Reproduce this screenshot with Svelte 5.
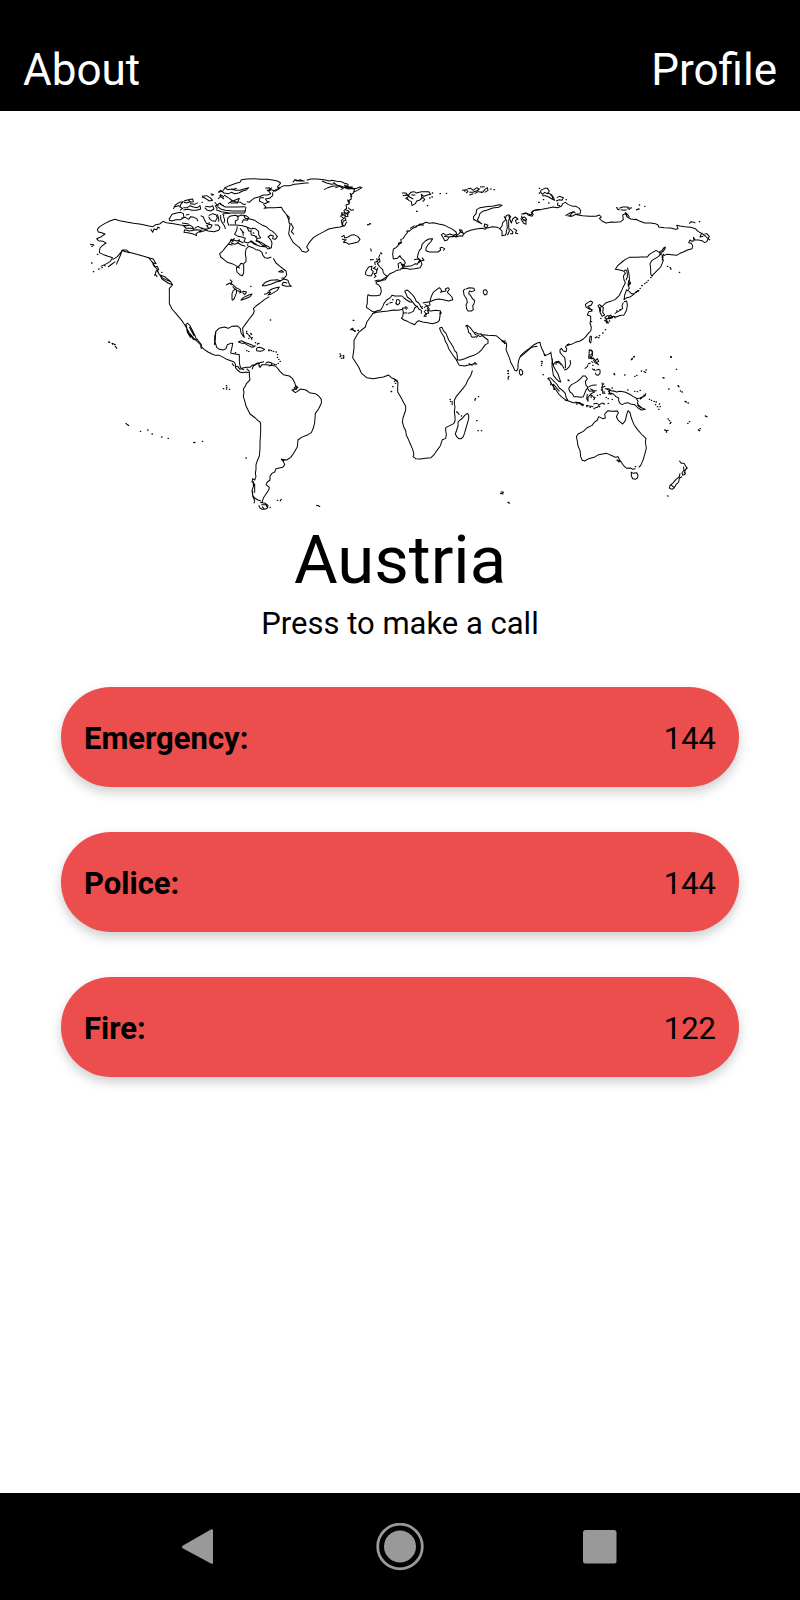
<script>
  const contacts = [
    { label: 'Emergency', number: '144' },
    { label: 'Police', number: '144' },
    { label: 'Fire', number: '122' }
  ];

  // Coastlines by region; each region is drawn at three units to the pixel.
  const regions = [
    {
      name: 'North America', x: 80, y: 165,
      coast: [
        'M98 278l-14-4-13-5-13-6 2-14 8-8 10-7-9-5-14-2-5-6 14-6 11-8-10-4-10-2-3-8 8-9 14-8 15-8 16-5 14 4 20 4 22 4 22 3 24 5 12 2 8-6 12-2 10-8 10 4 22 3 20 4 20 2',
        'M98 278l-8 12-14 8-14 6M98 284l14-9 10-12 4-6 12 3 10 3-8-8-14 0-3 12-8 18-6 14M84 306l12-9 10-7M148 262l16 4 22 6 20 6 8 10 8 12 10 14 4 12 10 12 16 8 10 4M206 278l14 4 8 14-8-2-8-8M218 296l6 10 8-2 4 10-8 4-2 10 6 8M240 330l16 6 16 14 6 10-14-6-18-12-6-12M212 192l6 10 4-10 8 2 4-8 6 4M276 362l-8 8 0 22 0 24 8 16 12 14 12 14 8 10 8 12 12 22 14 16 8 8 12 12 2 12',
        'M322 474l8 8 8 16 9 18 2 10-10-4-10-14-8-16-3-14 6-4M328 486l14 26M318 478l4 24 10 16',
        'M404 540l2-18 1-22 10-10 16-4 12 4 10-6 18-1 8 8 2 12 6 10 4 4-4-14-1-14 10-14 12-16 8-10 5-10-3-8 8-8 14-10 12-10 14-8',
        'M546 362l10-10 16-6 20-2 10 4-14 3-14 6-18 5-10 0M600 348l12-6 12 4 4 12 6 6-16 0-12-4 4-8 12 2M566 378l10-6 12-4 10-2-6 10-10 6-10 6-8 2 8-8-10 0M552 388l8-2 10-6',
        'M580 280l8 14 12 10 10 8 8 6 2 12-6 8-10 2M612 322l-8-6-8 4 12 2M574 276l-10 4-10-2-6-8-2-8-8-6-10-2-10-6-12-4-8 8-2 14 2 14 0 10-7 6 0 14 0 14-4 8-8-3-8-8-2-12 8-6 6-8 6 2M480 310l-12-8-12-6-14-4-10-8-10-8-3-10 9-8 8-10 10-12 8-10 10-6',
        'M438 360l12-6 10 6 8 8 12 6 2 6-10-3-8-5-6-8M450 344l6 6-4 10M456 404l0-18 4-10 8-4 2 10-4 10-4 10-6 4M478 384l12-5 10 2-6 8-6-6M482 406l8-8 16-8 10-3-6 8-14 6-14 5',
        'M280 132l6-12 12-8 12-2-8 8-2 8 8 4-8 6M282 126l14-4 8 6M312 108l12-4 6 6-10 4-8-2M326 104l12-2 2 8-10 2M310 128l12 0 8-6 10 4 12 2 8-6 2 10-12 4-14 0-12-3-14 2M330 116l14 2 10-5',
        'M366 94l14-2 10 6 8 8-10 2-12-8-10-4M392 86l10 4M376 124l14 2 8-4 4 10-10 6-10-2-8-8M404 112l8 8 8-6 8 8 8 4 14 0 20 0 26-1M412 124l10 8 14 4 22 2 40 0M420 118l12 4M408 134l16 6 20 3 50 1 4-18M412 132l-6-10 10-2M430 146l20-1',
        'M268 162l8-14 14-4 12-2 8 4 2 12-10 6-14 0-12 4-8-2 0-8M304 160l12-3 10 6 6-8 10 2 8 4 4 8M318 150l10-2M362 152l8 4 4 10 6 10 10-3M386 152l12-6 10 3 4 10-6 10-10-2-6-4-4-8M412 148l4 12 0 10',
        'M306 174l20 3M304 180l14 3 10-3 8 4 6 8-10-2-14 0-8-8M314 194l14 4 20-4 16 2-10 6-6 4 2 6-8-4-14-4-16-2 2-8M344 190l10-6 14 8 14 0 10-4 4-8-8-2-8 4 6 8M364 188l20 10 18 2 14-4 4-8-6-8-10 0M358 202l20-6',
        'M422 150l0 12 4 10 8 12 2 8M430 154l4 10-2 10M428 146l4 8M446 182l-4-14 2-10 8-5 14-2 8 3 0 10-8 4 0 10M470 156l14-6 14 2 8 6-4 8-12-2-4 10M490 150l6 10 8 2M448 180l20 0 20 2 12 4 14 6 10-2',
        'M494 160l16 2 14 4 10 7 14 8 12 5 8 8 10 5 8 8 6 8-6 8-8-2 2-8-8-3-8 6 8 8 4 10-2 14-10 4-8-8-10-4-8-8-10-4 4-8 10-1-6-10 0-10-10-8-10-2M472 184l-2 12-6 12 10 6 12 2 10 4-4 10 12 4 10-6 8 6 8 4M502 188l4 10 10 0M480 190l8 10 2 12M512 198l2 12 10 2 8 10M530 226l14 6 12 8 14 8M510 228l14 10 16 6 20 2',
        'M452 222l8 6-6 6 10 4 10-4 10 6 12 4M460 224l10 4 10-4M470 236l8-8 12 6M446 238l12 2',
        'M416 82l12-4 8-10 12-6 20-7 12-3 4-8 16-2 22-1 20 2 20 0 16 2 14 3 10 6-6 8-4 4 8 4-14 8-12-4-8 4 6 8-10 4-12 0-12 5-16 5-8 6-6 6-8-2M434 66l8 8 14-2 10 4 14 0 12-4 14-4-6 6-12 4-12 6-12 2-10-4-8 4-14-2-10-8-8 6M432 90l16 10 10 8 10-4 10-4-6 14-14 0-6 0M444 116l12-8 12 2 14 2 8 6 8 0M432 102l-10-8-8 8M420 88l12 8M556 70l12-2 4 6-12 2M562 78l14-10M456 74l14-4'
      ],
      dots: '32 238 36 239 40 240 36 244 35 294 40 320 56 312 66 308 74 302 52 268 452 226 420 92 558 264 512 364 571 465 224 330 232 320 245 322 88 532 98 536 104 538 396 90 366 112 500 505 508 512 516 518 506 520 514 508 520 204 528 214 490 202 502 240'
    },
    {
      name: 'Greenland and the British Isles', x: 220, y: 165,
      coast: [
        'M160 80l8-6 12-6 12-6 16 0 16-4 16-2 16-2 10 0M218 52l8-8 12 4 16 0M222 44l10 4 8-4 10 4M260 46l12-4 20 0 20 2 16 4 8-2 14 3 14 1 8 4 12 4 0 6-12 2 14 2 12 0M306 48l14 6 14 4 10-2M312 74l12-6 12-4 14-2M346 68l12-4 12 6-8 4M340 52l10 8 14 4 20 8 14-2 6 2-4 12-8 6 2 12-10 6 4 8-10 4 2 10-8 6 2 8-10 0 4 8M372 60l16 6 10 0M384 68l16 4 10-2 10-4 6 2-14 8-12 6M390 84l6 12M382 104l8 8',
        'M158 82l0 10-10 8-12 2 6 8 6 0-14 6-8-4-8-4 2-10 12 0M130 118l8 8-6 4 14-2 18 0 20-1 6 10 8 10 10 10-2 12 4 10-2 14-2 14 6 12 8 14 10 8 8 6 8 12 12 3 8-6-6-10 8-14 12-14 16-10 16-8 14-8 18-4 16-2 14-4 6-12M200 150l6 14 2 12M212 174l8 14-6 12 8 8',
        'M374 184l-8-6-2-12 8-6-10-6 4-6 10 4-2-10 10 6 2-10-10-4M366 182l4-14 8-2-4-10 10-2-4-10 10-4M384 128l10 8 8-2',
        'M364 216l8-5 2 8 10-3 8-5 10-2 12 6 6 8-6 8-12 3-16 4-6-5-10-1 6-6-10-4M370 224l10 0',
        'M436 328l2-10 8-12 10-2-2 10 6 6-6 12-10 0-8-4M466 300l-2-8 8-4 6-8 2 10-8 6 8 10 8 8 2 10 6 6 6 4-6 10-10 2-14 0-8 3M468 304l-8 6 10 4 0 10-8 2 6 8-6 4M474 308l-4 10M476 278l4-10M452 250l2 10'
      ],
      dots: '443 179 449 177 452 284 458 284 470 282 482 264 472 290 392 494 400 496 404 498 414 496 398 490 400 466 590 139'
    },
    {
      name: 'Europe and western Asia', x: 340, y: 165,
      coast: [
        'M160 282l-2-14 2-16 8-4 6-6 2-8 8-2-2-8 8-4 6-10 8-10 6-4 8-6 10-4 10-8 10-2 10-4 10 3 12-2 16 4 18 4 12 6 12 6 10 8 2 6-10 4-10-4-12 4-8-6-6 4 6 10 4 8 8-2 6-10 10 0 10-2 10-8 6-8M198 198l12 0M210 190l14-8M226 184l14-4 12 0M174 240l12-8M312 214l14 2 14-2',
        'M340 212l8 4 12-4 8 2 2-10-8-2-4-8 8 2 2 8M370 208l10-8 12-4 16-4 18-2 10 3 8-12-10-4-2 8 10 4 16-4 14 2 8 4 6-8 2-10 8-8 2-12 8-4 6 6-6 10 0 20 2 14-6 12M402 166l-2-10 8-10 2-12 10-6 18-3 22-2 18-4 8 2-10 6-18 2-16 6-14 4-8 6-4 12-4 8 6 6 8 6M400 162l16 10 10 4M478 190l8 8 0 14 10-2 4-8M506 152l4 12 4 10 4-12 8-6 8 6-8 4 4 10 8-4M492 154l8 14 2 20-4 14M510 192l8 8 0 6-8 0M520 190l10 6-4 8 8 2M544 158l10-2 6 8-10 4M550 148l8-4 6 6 12 4 4-6-6-6 10-6 18-2',
        'M160 282l12-2 8-8 4 8 8 6 4 8-4 6 2 4 10 0 12-2 10-6 6 2 4-8 4-6-8-6 2-10 4-12 6-6 2-12 10-10 10-6 12-1-6 10-8 8-6 10 0 8 10 4 14 0 12 0 8-6-2-6 6-2 8 4-4 6M176 310l-2-14 8-4 4 10 4-4 2 8-8 4M186 296l2 12M222 284l12-2 8 4-6 8M180 312l16-2 14 3 14-2 16-3 6-10-4-10 10-2-6-8',
        'M182 314l-12 2-10 6-10 4-8 8-12 8-8 6-12 2-2 6 8 4 6 8 2 12-4 10-10 2-18 0-8-3-2 10 0 14-3 14 9 6 8 6 6 2 10-4 10-2 6-10 4-10 8-10 12-8 4-6 8 2 12 0 10 0 6 6 8 6 10 6 8 0 6 8 6 6-6 4-4 10-8 4-8 2',
        'M194 378l4 8 4 10 10 8 8 10 6 8 6 2 4 8 8 4 0 10M194 378l8-3 8 7 8 8 6 8 4 10 8 6 4 6 4 8 4-4M248 414l20-4 2 10-8 4 6 8-6 4 4 8-8 2M254 418l8 4-10 6M252 438l8 12M270 408l4-14 6-12 10-8 8-6 4 4 4 8 12-2-2-6 8-4 4 4-6 10 8 8 6 6 2 8-12 4-16-4-14-2-12 2-14 6M300 382l8-2',
        'M96 446l14-4 14-2 20-2 16-3 14 1 14-3 2 10-2 12-4 4 8 6 10 4 12 6 10 4 6-8 6-4 12 4 14 2 16 3 14-4 6-6 2-14 2-14-14-2-16 2-12-2M298 444l8 0M258 446l-6 8 8 0',
        'M170 404l6 0 4 4-2 8-6 4-4-6 2-10M138 420l8-4M148 414l10-2M188 444l14 0M186 430l10-2 4 6M196 424l8 6',
        'M378 372l10-4 14 2 2 6-8 4-8-2-2 8 6 6 6 10 6 4-2 10-4 6 2 12-6 4-10 0-4-6-2-12 4-8-2-10-8-12-2-14 6-4M430 376l8-2 4 6-2 8-6 2-4-6 0-8',
        'M186 84l12 0 6 8 8-10 10-2 8 4 14-4 10 0 12 0 6 8-10 2-10 4-8-6 2 12-8 6-8 2-4 8-10 6-2-12-8-4-6-8 8-4-10-4-10 2M240 104l8-8 6 8-6 6M196 100l8 4M214 90l12 0M208 96l12 6',
        'M366 76l14-2 4 6-6 4M382 72l10-2 8 6 10-8 8 4-8 6-12 4-10 0M404 86l10-6 14 2 6-8 8-6 2 8-10 6M420 66l14-1M388 90l12-4',
        'M98 446L80 472L76 486L56 502L42 526L42 550L38 578L56 606L64 624L80 638L100 641L116 638L130 636L146 630L154 638L168 644L172 652M162 640l2 6'
      ],
      dots: '84 179 90 176 300 86 319 85 277 84 276 96 269 99 262 122 230 139 92 284 110 290 124 266 462 74 452 72 374 78 412 76 424 82 40 466 38 494 44 498 54 496 34 492 2 572 10 572 10 578 4 580 504 618 504 626 506 634 504 642 158 404 168 416 246 430 256 436 262 430 300 446 596 112 598 84'
    },
    {
      name: 'Eastern Asia', x: 520, y: 165,
      coast: [
        'M4 152l4 10 10 6 0 10-8-4-8-14M4 148l12-4 18 6 4-12 12-4 16-1 20-4 14-3 12 2 12-4 4-8 8-4 8 6 14 6 10 0 10 6 4 8-2 8-12 2-10 4-10 2 8-10 8-4M142 152l14 2 10-6 8 2 14 2 20 2 20 0 10-4 6 6-6 4 8 8 12 6 16-3 12 1 16-2 8-6-2-14 8-4 6 10 10 6 16 2M316 142l8 8 4 6M346 162l12 6 16 6 18 0 14 2 8 4 2 6 16 2 20 1 14 4 8-2-4-10 10 2 14 2 18 2 14 4 8 8 14 8 8 6 8 8 6 4',
        'M554 206l6 0 8 8-4 8-4 8-6 3-8-6-10-2-10 0-6-8 2 10-6 2-6-4-4 8 8 2 4 8-2 8-14 4-12 6-10 4-10 6-16-2-14-1-8 4M544 206l-4 10 10-2M514 228l8 0',
        'M432 266l-6 10 4 10-4 10-4 10-8 8-8 8-6 6-4 6-4-8 0-14-2-16 6-10 10-6 10-6 8-8-10-6-6-4-10 6-10 6-6 8-18 0-16 1-20 0-12 6-10 8-12 10-8 12 14 2 12 4 4 6-6 8 2 12 4 8-6 12-6 14-6 12-12 12-14 6-14 4-10 10-8 4 2 10-2 4',
        'M416 262l10-6 6-8 4-2-4 10-8 6M428 262l8-14M418 268l6-6M424 270l8 0M426 286l4-12M312 316l8 0 2 10 0 10-4 10M322 308l4 14 2 14 0 10 4 10-8 4M326 346l-2 14 4 10-4 4M330 348l-4 16M318 374l8 4 8 8 10 0-8 6-6 4-10 2-8 6 2-14 6-16M344 384l8-6 6-2M312 410l8-2 2 12-2 14-6 12-4 6M310 412l-4 10 2 8-8 6-10 6-6 4M308 450l-10 2-10 4-8-2-10 4-10 4-6-4 8-6 12 0M256 458l6 12 4 4-6 0-4-8M264 458l8-8 6 8-12 4M240 420l10 8-2 14 6 8-8 4-6-12-2-12-4-8 6-4',
        'M218 434l-10-2-10-6-2-8 8-6 8-4 6 4-4 8-10 4 8 8 4 6-10 2-4 10 10 4 0 10-2 10 4 14-2 10-8 8-6 8-8 8-10 6-14 4-12 6-8 2-10 4 4 8-2 8-8-2-6-8-4 4 0 8 6 8 8 8 2 14 0 18',
        'M210 514l4 0 0 10-2 10-4-4 2-16M208 556l8 2 2 12-6 10-6 0 2-24M214 578l8 2M220 584l6 10 8 2M204 596l8-2',
        'M0 574l12-12 14-10 14-12 12-6 8-2 2 10 4 10 4 8 4 12 10-4 8-4M92 560l2 12 2 10 2 18M108 600l0-8 10 2 6 6M140 540l8-4',
        'M62 76l12-6 8 0 6 8-6 8-8-4-6 6-6-6 0-6M66 92l10 0 10 4 10 6 8 4-4-10-8-6M84 84l12 6 2 12M110 98l8-4 6 2M108 108l10-4 8 2 4-8-6-2M114 112l-2 8 8 2M136 152l14-8 10-4 6 4',
        'M298 130l10-4 14 0 8 4 6-2M302 134l10 2 8-2M322 130l8 4M314 144l8 4M320 144l0 12M508 176l4-6 10 2 4 2M348 134l8-2',
        'M378 352l0-2M366 360l-2 2M352 380l4-2'
      ],
      dots: '58 70 56 112 70 104 86 114 138 104 290 128 292 132 296 134 358 120 374 124 356 132 350 134 538 170 442 304 450 308 452 312 478 322 380 352 374 356 366 362 360 370 354 378 348 382 384 346 392 338 256 494 248 504 238 512 230 516 226 518 236 518 242 460 254 466 268 468 284 458 290 438 300 434 336 580 342 574 334 584 452 576 66 590 214 470'
    },
    {
      name: 'South America and the Caribbean', x: 80, y: 320,
      coast: [
        'M350 56l6 8 8 10 0 6 8 8 12 8 12 6 10 4 12 0 12 6 10 6 12 4 10 4 4 6 0 10 6 8 8 6 8 2 10-2 8 2M404 74l0-24 4-14M406 68l4 14 8 6 12 2 8-4 4-12 10-4 6 0-2 12-4 16 2 2 12 2 12 2 0 10 0 12 2 12 4 8 8 4M466 138l8 2 6 8 8-4 12-2 10 0 6-6 8-2 6-4 10-2M456 130l6 8',
        'M500 146l8 8 0 14 2 10-2 4-8 8-4 8-6 10 2 8-2 14 4 12 4 16 6 12 6 12 8 6 8 6 8 8 6 4 2 6 0 24-2 30 0 20-2 22-6 14-4 12 0 14-2 12 2 10-4 10-6-4-2 10 6 4-2 10-4 12 2 14 6 8 10 6 8 2',
        'M520 484l0 14M524 492l0 14 0 12M518 512l0 16 6 14-2 8M540 546l6 2 10 2 8 6-2 8-8 4-8 0-6-4-4-8M546 560l8 8M544 554l14 0 4 8',
        'M546 548L550 534L558 522L566 510L568 502L558 494L562 486L570 480L570 468L576 460L584 456L588 446L608 442L614 434L610 424L604 418L620 420L632 412L642 398L652 380L654 360L664 352L684 344L694 338L700 324L704 308L706 280L716 266L724 250L724 238L716 228L706 221L688 218L678 210L662 207L652 214L646 218L636 210L646 208L654 202L648 198L642 204L650 208L644 188L638 176L628 168L610 164L600 154L592 144L586 138L572 136L558 134L546 134L540 142L536 134L540 128L530 132L520 138L516 148',
        'M604 416l8 8',
        'M538 128l14-3M556 130l8-4 10 2 2 8-10 2M576 130l10 4',
        'M474 66l10-4 8 4 10 4 12 4 8 6-6 2-12-6-10-6-8 0-10-4M530 84l8-2 8 2 8 4-6 4-8 2-10-2 0-8M564 90l8 0M498 38l8 6M506 46l8 8 2 6'
      ],
      dots: '86 66 96 70 98 72 104 74 106 80 109 84 439 197 440 202 430 206 439 207 448 208 138 311 142 314 145 316 181 334 203 330 216 342 245 351 264 355 341 368 344 367 367 364 498 414 592 541 601 542 603 538 710 556 714 557 718 559 570 562 500 92 506 94 466 98 580 94 588 96 592 104 592 112 600 124 594 130 588 134 596 118 574 92 566 92 500 34 512 40 526 68 536 70 532 72 524 78 538 140'
    },
    {
      name: 'Africa and Arabia', x: 320, y: 280,
      coast: [
        'M230 300l4 8-1 14 0 14 6 10 6 10 6 12 6 10 0 12-4 12-4 12-2 12 4 14 6 12 2 14 6 12 6 14 6 14 4 12 0 8-2 4 8 6 14 1 16-2 16-2 10-10 8-12 10-14 4-12 2-6 10-4 2-12-2-12 0-8 12-6 12-6 4-8 0-14-2-14 2-14-2-10 0-10 6-12 10-12 10-12 8-10 6-14 8-12 4-10 2-8',
        'M358 144l6 14 8 12 4 14 6 10 4 12 8 12 8 12 6 8 4 8 6 10 16 2 14-4 16-2 8 0M358 144l8-2 4 10 8 8 4 10 4 10 8 12 6 10 4 10 6 6 2 12 0 10 10 0 12-4 14-6 14-4 14-8 10-10 4-6 6-8 8-4 0-10-8-6-10-8-4-6M446 250l10 6 4-6M436 138l6-2 8 6 6 8 4 6 8 2 6 4 8 0 6 4-8 4-6-4-4 6-4-2-6 2-6-2-2-8-6-4-2-10-4-12M462 160l8 6M488 164l16 2 24 1 8 6 6 6 8 4 4 8 4-4 2 8-2 14 4 10 6 14 4 14 8 14 4 10 6 2 4-8 0-12 2-12 4-10 10-8 10-8 10-10 8-4 14-2M544 182l8 6 4-8',
        'M598 270l4-2 6 6 0 8-6 4-4-6 0-10M442 400l4 6 0 10-4 14-4 14-4 14-4 12-6 6-8 0-6-6-4-8 4-12 4-12 0-12 4-4 10-8 6-8 8-6M542 636l8 0-2 6-8-2M412 396l6 8M222 306l6-6'
      ],
      dots: '60 222 60 230 70 228 70 234 218 320 213 334 214 335 226 310 464 360 466 356 475 350 410 396 424 408 470 422 474 452 484 452 390 358 396 366 396 372 391 364 564 667 567 669 464 248 466 250 564 272 564 280 564 292'
    },
    {
      name: 'South-east Asia and Oceania', x: 520, y: 300,
      coast: [
        'M96 176l2 14 4 12 6 10 6 10 4 12 4 12-6-2-8-8-8-10-2-14-2-12 0-14M100 194l6-8 10-2 8 8 6 10 2 4M150 180l2 10-4 10-8 8-8 2M84 234l8 0 8 8 10 10 8 12 10 8 8 8 2 12 6 10-10-4-10-8-8-8-8-12-8-10-6-10-4-8-6-6M90 248l10 8 2 12M100 252l18 22M134 300l14 4 12 4 12 0 10 4 8 6M166 306l16 4 10 4M198 316l10 2 12 2M220 312l10-2 8 4-6 8-8 2M236 316l8-6 8 0',
        'M148 262l6-8 8-4 10-6 10-8 6-8 8 0 6 8-6 8 2 12 6 6-6 8-4 10-4 10-8 2-10-2-10 0-6-10-6-4-4-10 2-4M206 260l10-4 14-1M202 264l6 10 10-2 12 0M202 282l-2 14 4 8 0-12 6-8 8 4 6 8-4 4M210 266l8 4 2 8-8 4 2 12M244 260l4 10 0 10 8 0M246 248l2 14 8-4M254 266l12 0 8 6 8 2M260 268l10 4-4 10 10 0',
        'M280 272l10 4 10-2 14 2 14 6 12 8 8 4 6 10-2 6 6 8 8 6 10 4-12 2-10-6-10-10-12-2-8-4-10 2-8 4-6-4-4-8 0-8-8-4-8-8-12-4M350 296l10-2 8-4M360 298l14-12 4-6M370 286l8 0M352 316l12 8',
        'M206 150l8 0 4 6-4 8-6 2M208 166l6 10 8 0M220 174l6 8 6-6 4 8-6 4M214 184l6 4M226 180l4 10M226 212l8-4 6 2 0 10-6 6-6-2-2-6M194 206l8-6 2-6M216 206l8 6',
        'M258 338L264 332L274 334L292 333L295 338L289 350L294 360L308 372L316 362L320 344L324 332L330 338L334 354L342 374L352 388L364 402L378 416L376 426L379 444L374 464L370 478L362 496L356 502M258 338L254 342L256 354L248 356L236 350L232 360L222 368L216 376L200 384L190 394L174 402L169 410L172 424L174 438L180 452L182 470L186 480L194 483L206 476L222 472L236 464L260 460L278 468L286 472L294 470L300 482L290 480L296 486L302 484L310 496L320 505L332 504L338 508L346 506',
        'M332 516l8 4 10-2 4 8-2 8-6 4-8-2-4-8 0-12',
        'M478 482l6 8 8 0 6 10 4 4-8 8 2 10-8 4-2-8 6-8-2-10M500 502l-8 18M480 520l-2 10-10 8-8 10-10 8-2 8 8 4 6-4 6-10 8-8 2-12 8-4M452 554l10 8',
        'M72 162l6 4'
      ],
      dots: '64 184 65 190 64 196 69 224 84 236 144 240 146 242 282 221 283 224 314 225 344 229 350 226 364 213 372 215 378 210 376 217 335 178 341 171 452 170 453 172 469 208 429 233 431 234 446 267 474 257 476 260 481 273 486 276 495 304 498 306 504 309 323 270 344 274 352 275 360 271 372 288 388 298 394 301 402 304 408 306 406 314 412 320 418 312 420 320 416 328 444 357 448 362 452 367 450 370 434 390 438 392 443 391 439 396 503 370 508 365 535 390 540 386 538 392 556 348 560 350 443 588 258 292 264 296 276 298 240 284 224 292 222 276 232 286 170 312 178 308 184 314 200 320 210 322 222 326 238 320 252 312 264 310 250 252 244 270 252 276 266 274 276 264 346 500 218 196 234 194 222 208 210 172 102 268 92 254'
    }
  ];

  const dotPath = (list) => {
    const n = list.split(' ');
    let d = '';
    for (let i = 0; i + 1 < n.length; i += 2) d += `M${n[i]} ${n[i + 1]}h1`;
    return d;
  };
</script>

<div class="screen">
  <header>
    <a href="#about">About</a>
    <a href="#profile">Profile</a>
  </header>

  <main>
    <svg class="map" viewBox="80 165 640 360" role="img" aria-label="World map">
      {#each regions as r (r.name)}
        <g transform="translate({r.x} {r.y}) scale(0.33333)">
          <path class="coast" d={r.coast.join('')} />
          <path class="islands" d={dotPath(r.dots)} />
        </g>
      {/each}
    </svg>

    <h1>Austria</h1>
    <p>Press to make a call</p>

    <div class="contacts">
      {#each contacts as c (c.label)}
        <button type="button">
          <strong>{c.label}:</strong>
          <span>{c.number}</span>
        </button>
      {/each}
    </div>
  </main>

  <nav>
    <button type="button" aria-label="Back">
      <svg width="48" height="48" viewBox="0 0 48 48">
        <path d="M6.6 22.8L35 6.4Q37 5.6 37 7.5V39.5Q37 41.4 35 40.6L6.6 25.2Q5 24 6.6 22.8Z" fill="#999" />
      </svg>
    </button>
    <button type="button" aria-label="Home">
      <svg width="48" height="48" viewBox="0 0 48 48">
        <circle cx="24" cy="23.5" r="22.3" fill="none" stroke="#999" stroke-width="2.8" />
        <circle cx="24" cy="23.5" r="16" fill="#999" />
      </svg>
    </button>
    <button type="button" aria-label="Recent apps">
      <svg width="48" height="48" viewBox="0 0 48 48">
        <rect x="7" y="7" width="33.5" height="33.5" rx="2.5" fill="#999" />
      </svg>
    </button>
  </nav>
</div>

<style>
  :global(body) {
    margin: 0;
    background: #fff;
  }

  .screen {
    min-height: 100vh;
    display: flex;
    flex-direction: column;
    font-family: Roboto, sans-serif;
    color: #000;
    background: #fff;
  }

  header {
    display: flex;
    justify-content: space-between;
    padding: 44px 23px 15px;
    background: #000;
  }

  header a {
    color: #fff;
    font-size: 44px;
    line-height: 52px;
    text-decoration: none;
  }

  main {
    flex: 1;
    display: flex;
    flex-direction: column;
    align-items: center;
    padding: 54px 61px 0;
  }

  .map {
    display: block;
    width: 94.4%;
    fill: none;
    stroke: #000;
    stroke-linejoin: round;
  }

  .coast {
    stroke-width: 3;
  }

  .islands {
    stroke-width: 4;
    stroke-linecap: round;
  }

  h1 {
    margin: 0;
    font-size: 67px;
    font-weight: 400;
    line-height: 70px;
  }

  p {
    margin: 11px 0 0;
    font-size: 31px;
    line-height: 36px;
  }

  .contacts {
    align-self: stretch;
    display: flex;
    flex-direction: column;
    gap: 45px;
    margin-top: 45px;
  }

  .contacts button {
    display: flex;
    justify-content: space-between;
    align-items: center;
    height: 100px;
    padding: 4px 23px 0;
    border: 0;
    border-radius: 50px;
    background: #ec4d4d;
    box-shadow: 0 5px 12px rgba(0, 0, 0, 0.2);
    color: #000;
    font: inherit;
    font-size: 31px;
    line-height: 36px;
  }

  nav {
    display: grid;
    grid-template-columns: repeat(3, 1fr);
    padding: 0 12.5%;
    background: #000;
  }

  nav button {
    display: flex;
    justify-content: center;
    align-items: center;
    height: 107px;
    padding: 0;
    border: 0;
    background: none;
  }
</style>
